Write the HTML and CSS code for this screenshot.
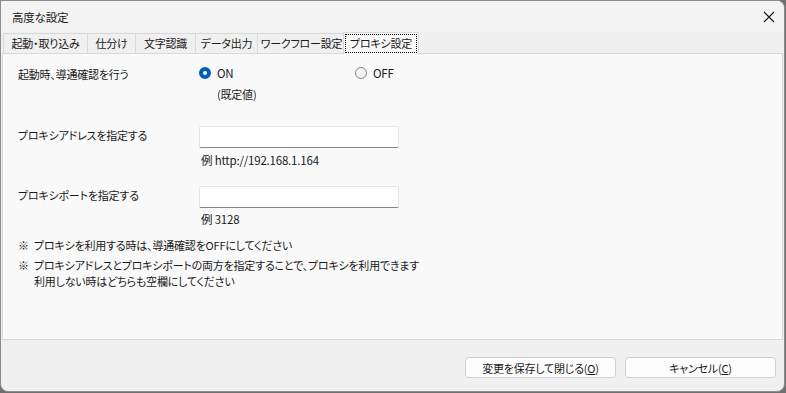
FILE: index.html
```html
<!DOCTYPE html>
<html>
<head>
<meta charset="utf-8">
<link rel="stylesheet" href="styles.css">
</head>
<body>
<div class="window">
  <div class="titlebar">
    <span class="title">高度な設定</span>
    <svg class="close" width="12" height="12" viewBox="0 0 12 12">
      <path d="M1 1 L11 11 M11 1 L1 11" stroke="#1a1a1a" stroke-width="1.1" fill="none"/>
    </svg>
  </div>

  <div class="tabs">
    <div class="tab tab-start">起動・取り込み</div>
    <div class="tab tab-sort">仕分け</div>
    <div class="tab tab-ocr">文字認識</div>
    <div class="tab tab-output">データ出力</div>
    <div class="tab tab-flow">ワークフロー設定</div>
    <div class="tab active"><span class="focus">プロキシ設定</span></div>
  </div>

  <div class="panel">
    <div class="row">
      <div class="label">起動時、導通確認を行う</div>
      <div class="radios">
        <div class="option on">
          <div class="radio-line"><span class="radio checked"></span>ON</div>
          <div class="note-default">(既定値)</div>
        </div>
        <div class="option">
          <div class="radio-line"><span class="radio"></span>OFF</div>
        </div>
      </div>
    </div>

    <div class="row row-address">
      <div class="label">プロキシアドレスを指定する</div>
      <div>
        <div class="textbox"></div>
        <div class="hint">例 http://192.168.1.164</div>
      </div>
    </div>

    <div class="row row-port">
      <div class="label">プロキシポートを指定する</div>
      <div>
        <div class="textbox"></div>
        <div class="hint">例 3128</div>
      </div>
    </div>

    <div class="notes">
      <div class="note"><span class="mark">※</span><span>プロキシを利用する時は、導通確認をOFFにしてください</span></div>
      <div class="note"><span class="mark">※</span><span>プロキシアドレスとプロキシポートの両方を指定することで、プロキシを利用できます<br>利用しない時はどちらも空欄にしてください</span></div>
    </div>
  </div>

  <div class="footer">
    <button class="btn">変更を保存して閉じる(<u>O</u>)</button>
    <button class="btn">キャンセル(<u>C</u>)</button>
  </div>
</div>
</body>
</html>
```

FILE: styles.css
```css
html, body {
  margin: 0;
  padding: 0;
}

body {
  width: 786px;
  height: 393px;
  background: #6f6f6f;
  font-family: "Noto Sans CJK JP", sans-serif;
  font-feature-settings: "palt";
  font-size: 11px;
  letter-spacing: -0.2px;
  color: #1a1a1a;
  overflow: hidden;
}

.window {
  width: 785px;
  height: 392px;
  box-sizing: border-box;
  border: 1px solid #8c8c8c;
  border-radius: 0 8px 8px 8px;
  background: #f0f0f0;
  display: flex;
  flex-direction: column;
  overflow: hidden;
}

.titlebar {
  height: 31px;
  background: #f3f3f3;
  display: flex;
  align-items: center;
  justify-content: space-between;
  padding: 0 9px 0 11px;
  flex-shrink: 0;
  font-size: 11.5px;
}

.title {
  line-height: 16px;
}

.close {
  display: block;
}

/* タブ */
.tabs {
  display: flex;
  align-items: flex-end;
  height: 21px;
  padding-left: 2px;
  flex-shrink: 0;
  position: relative;
  z-index: 1;
}

.tab {
  height: 20px;
  line-height: 19px;
  padding: 0;
  text-align: center;
  box-sizing: border-box;
  border: 1px solid #d9d9d9;
  border-bottom: none;
  margin-right: -1px;
  background: #f0f0f0;
  white-space: nowrap;
}

.tab-start { width: 85px; }
.tab-sort { width: 49px; }
.tab-ocr { width: 61px; }
.tab-output { width: 63px; }
.tab-flow { width: 89px; }

.tab.active {
  width: 76px;
  height: 22px;
  margin: 0 0 -1px -2px;
  padding: 1px 1px 0 1px;
  background: #f9f9f9;
  position: relative;
}

.tab.active .focus {
  display: block;
  border: 1px dotted #000;
  line-height: 17px;
}

.panel {
  height: 287px;
  box-sizing: border-box;
  margin: 0 1px 0 1px;
  border: 1px solid #d9d9d9;
  background: #f9f9f9;
  padding: 11px 15px 0 15px;
  flex-shrink: 0;
}

.row {
  display: grid;
  grid-template-columns: 181px 1fr;
  line-height: 16px;
}

.row-address {
  margin-top: 24px;
}

.row-port {
  margin-top: 18px;
}

.label {
  padding-top: 1px;
}

.radios {
  display: flex;
}

.option.on {
  width: 156px;
}

.radio-line {
  display: flex;
  align-items: center;
  font-size: 11.5px;
}

.radio {
  width: 12px;
  height: 12px;
  box-sizing: border-box;
  border-radius: 50%;
  border: 1px solid #868686;
  background: #f3f3f3;
  margin-right: 6px;
}

.radio.checked {
  border: 4px solid #005fb8;
  background: #fff;
}

.note-default {
  margin-top: 5px;
  padding-left: 18px;
}

.textbox {
  width: 200px;
  height: 22px;
  box-sizing: border-box;
  background: #fff;
  border: 1px solid #e5e5e5;
  border-bottom-color: #868686;
  border-radius: 2px;
}

.hint {
  margin-top: 4px;
  padding-left: 2px;
  font-size: 11.5px;
}

.row-port .hint {
  margin-top: 3px;
}

.notes {
  margin-top: 10px;
  line-height: 16px;
}

.note {
  display: flex;
  margin-bottom: 4px;
}

.mark {
  width: 16px;
  flex-shrink: 0;
}

.footer {
  flex: 1;
  display: flex;
  justify-content: flex-end;
  align-items: flex-start;
  gap: 9px;
  padding: 17px 8px 0 0;
}

.btn {
  width: 151px;
  height: 21px;
  background: #fdfdfd;
  border: 1px solid #d0d0d0;
  border-radius: 4px;
  font-family: inherit;
  font-feature-settings: "palt";
  font-size: 11px;
  letter-spacing: -0.2px;
  color: #1a1a1a;
  padding: 0;
  line-height: 18px;
}
```
